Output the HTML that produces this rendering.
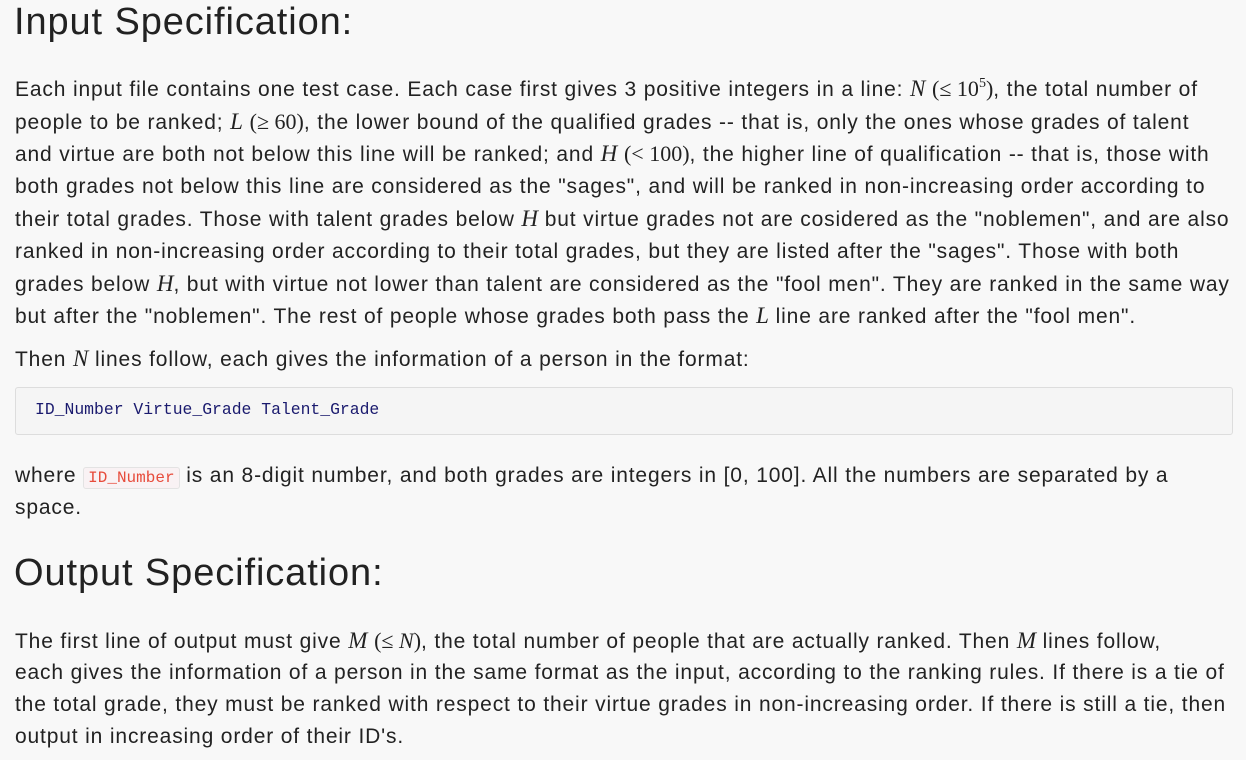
<!DOCTYPE html>
<html><head><meta charset="utf-8"><style>
body{margin:0;background:#f8f8f8;width:1246px;height:760px;overflow:hidden;position:relative;font-family:"Liberation Sans","DejaVu Sans",sans-serif;color:#222;}
.l{position:absolute;left:15px;font-size:21px;letter-spacing:0.85px;line-height:24px;height:24px;white-space:nowrap;}
h1{position:absolute;left:14px;margin:0;font-weight:normal;font-size:38px;letter-spacing:0.9px;line-height:44px;white-space:nowrap;color:#222;}
i.m{font-family:"Liberation Serif",serif;font-style:italic;font-size:23px;letter-spacing:0;}
.s{font-family:"Liberation Serif",serif;font-size:22px;letter-spacing:0;}
.sup{font-size:14px;display:inline-block;vertical-align:9px;line-height:14px;}
.pre{position:absolute;left:15px;top:387px;width:1216px;height:46px;border:1px solid #ddd;border-radius:3px;background:#f5f5f5;}
.pre span{position:absolute;left:19px;top:12px;font-family:"Liberation Mono",monospace;font-size:16.4px;color:#1a1a6e;}
code{font-family:"Liberation Mono",monospace;font-size:16px;letter-spacing:0;color:#e74c3c;background:#f9f2f4;border:1px solid #e3e3e3;border-radius:3px;padding:1px 4px;}
</style></head><body>
<h1 style="top:0">Input Specification:</h1>
<div class="l" style="top:77px">Each input file contains one test case. Each case first gives 3 positive integers in a line: <i class="m">N</i> <span class="s">(≤ 10<span class="sup">5</span>)</span>, the total number of</div>
<div class="l" style="top:110px">people to be ranked; <i class="m">L</i> <span class="s">(≥ 60)</span>, the lower bound of the qualified grades -- that is, only the ones whose grades of talent</div>
<div class="l" style="top:142px">and virtue are both not below this line will be ranked; and <i class="m">H</i> <span class="s">(&lt; 100)</span>, the higher line of qualification -- that is, those with</div>
<div class="l" style="top:175px">both grades not below this line are considered as the "sages", and will be ranked in non-increasing order according to</div>
<div class="l" style="top:207px">their total grades. Those with talent grades below <i class="m">H</i> but virtue grades not are cosidered as the "noblemen", and are also</div>
<div class="l" style="top:240px">ranked in non-increasing order according to their total grades, but they are listed after the "sages". Those with both</div>
<div class="l" style="top:272px">grades below <i class="m">H</i>, but with virtue not lower than talent are considered as the "fool men". They are ranked in the same way</div>
<div class="l" style="top:304px">but after the "noblemen". The rest of people whose grades both pass the <i class="m">L</i> line are ranked after the "fool men".</div>
<div class="l" style="top:347px">Then <i class="m">N</i> lines follow, each gives the information of a person in the format:</div>
<div class="pre"><span>ID_Number Virtue_Grade Talent_Grade</span></div>
<div class="l" style="top:464px">where <code>ID_Number</code> is an 8-digit number, and both grades are integers in [0, 100]. All the numbers are separated by a</div>
<div class="l" style="top:496px">space.</div>
<h1 style="top:551px">Output Specification:</h1>
<div class="l" style="top:629px">The first line of output must give <i class="m">M</i> <span class="s">(≤ <i class="m" style="font-size:22px">N</i>)</span>, the total number of people that are actually ranked. Then <i class="m">M</i> lines follow,</div>
<div class="l" style="top:661px">each gives the information of a person in the same format as the input, according to the ranking rules. If there is a tie of</div>
<div class="l" style="top:693px">the total grade, they must be ranked with respect to their virtue grades in non-increasing order. If there is still a tie, then</div>
<div class="l" style="top:725px">output in increasing order of their ID's.</div>
</body></html>
